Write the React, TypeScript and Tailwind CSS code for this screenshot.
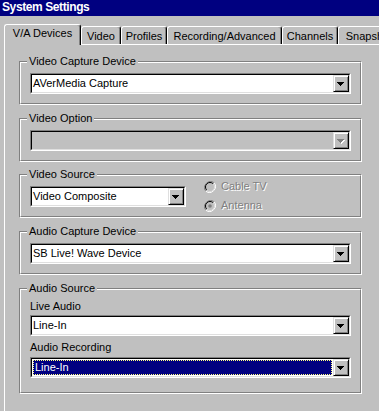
import React from "react";

const tabs = [
  { label: "V/A Devices", w: "w-[77px]", active: true },
  { label: "Video", w: "w-[40px]" },
  { label: "Profiles", w: "w-[46px]" },
  { label: "Recording/Advanced", w: "w-[115px]" },
  { label: "Channels", w: "w-[56px]" },
  { label: "Snapshot", w: "w-[62px]" },
];

function Arrow({ disabled }: { disabled?: boolean }) {
  const d = "M0 0h7v1H0zM1 1h5v1H1zM2 2h3v1H2zM3 3h1v1H3z";
  return (
    <svg width="8" height="5" viewBox="0 0 8 5" className="block">
      {disabled && <path d={d} fill="#ffffff" transform="translate(1 1)" />}
      <path d={d} fill={disabled ? "#808080" : "#000000"} />
    </svg>
  );
}

function Combo({
  value,
  className = "",
  disabled,
  focused,
}: {
  value?: string;
  className?: string;
  disabled?: boolean;
  focused?: boolean;
}) {
  return (
    <div
      className={`h-[21px] flex border border-t-[#808080] border-l-[#808080] border-r-white border-b-white ${className}`}
    >
      <div
        className={`flex-1 flex min-w-0 border border-t-black border-l-black border-r-[#dfdfdf] border-b-[#dfdfdf] ${
          disabled ? "bg-[#c0c0c0]" : "bg-white"
        }`}
      >
        <div className="flex-1 flex min-w-0">
          {focused ? (
            <div className="flex-1 m-[1px] bg-[#000080] border border-dotted border-[#ffff80] text-white leading-[13px] pl-[1px]">
              {value}
            </div>
          ) : (
            <div className="flex-1 leading-[17px] pl-[1px] text-black">{value}</div>
          )}
        </div>
        <div className="w-[16px] h-[17px] flex items-center justify-center pt-[1px] bg-[#c0c0c0] border border-t-[#dfdfdf] border-l-[#dfdfdf] border-r-black border-b-black shadow-[inset_1px_1px_0_#fff,inset_-1px_-1px_0_#808080]">
          <Arrow disabled={disabled} />
        </div>
      </div>
    </div>
  );
}

function Group({
  label,
  className = "",
  children,
}: {
  label: string;
  className?: string;
  children?: React.ReactNode;
}) {
  return (
    <div
      className={`relative border border-t-[#808080] border-l-[#808080] border-r-white border-b-white ${className}`}
    >
      <div className="h-full border border-t-white border-l-white border-r-[#808080] border-b-[#808080] px-[9px]">
        {children}
      </div>
      <span className="absolute left-[7px] top-[-7px] bg-[#c0c0c0] px-[2px] leading-[13px]">{label}</span>
    </div>
  );
}

function Radio({ label, checked }: { label: string; checked?: boolean }) {
  return (
    <div className="flex items-center h-[13px]">
      <svg width="12" height="12" viewBox="0 0 12 12" className="block">
        <path d="M10.2 1.8A6 6 0 0 0 1.8 10.2" fill="none" stroke="#808080" strokeWidth="1" />
        <path d="M1.8 10.2A6 6 0 0 0 10.2 1.8" fill="none" stroke="#ffffff" strokeWidth="1" />
        <circle cx="6" cy="6" r="4.5" fill="#c0c0c0" />
        <path d="M9.2 2.8A4.5 4.5 0 0 0 2.8 9.2" fill="none" stroke="#000000" strokeWidth="1" />
        <path d="M2.8 9.2A4.5 4.5 0 0 0 9.2 2.8" fill="none" stroke="#dfdfdf" strokeWidth="1" />
        {checked && <circle cx="6" cy="6" r="1.8" fill="#808080" />}
      </svg>
      <span className="ml-[5px] text-[#808080] [text-shadow:1px_1px_0_#fff] leading-[13px]">{label}</span>
    </div>
  );
}

export default function App() {
  return (
    <div className="w-[379px] h-[411px] overflow-hidden bg-[#c0c0c0] text-[11px] text-black font-['Liberation_Sans',Arial,sans-serif]">
      {/* Title bar */}
      <div className="h-[16px] bg-[#000080] text-white font-bold text-[12px] tracking-[-0.4px] leading-[14px] pl-[2px] whitespace-nowrap">
        System Settings
      </div>

      {/* Tabs */}
      <div className="h-[28px] flex items-end pl-[4px] whitespace-nowrap">
        {tabs.map((t) =>
          t.active ? (
            <div
              key={t.label}
              className={`${t.w} shrink-0 h-[21px] mb-[-1px] relative z-10 bg-[#c0c0c0] rounded-t-[3px] border-l border-t border-l-white border-t-white border-r border-r-black shadow-[inset_-1px_0_0_#808080] text-center pt-[2px] leading-[13px]`}
            >
              {t.label}
            </div>
          ) : (
            <div
              key={t.label}
              className={`${t.w} shrink-0 h-[18px] rounded-t-[3px] border-l border-t border-l-white border-t-white border-r border-r-black shadow-[inset_-1px_0_0_#808080] text-center pt-[3px] leading-[13px] overflow-hidden`}
            >
              {t.label}
            </div>
          )
        )}
      </div>

      {/* Panel */}
      <div className="ml-[4px] h-[367px] border-l border-t border-white pl-[14px] pt-[16px] w-[400px]">
        <div className="w-[343px] flex flex-col">
          <Group label="Video Capture Device" className="h-[44px]">
            <Combo value="AVerMedia Capture" className="mt-[10px]" />
          </Group>

          <Group label="Video Option" className="h-[44px] mt-[13px]">
            <Combo disabled className="mt-[10px]" />
          </Group>

          <Group label="Video Source" className="h-[44px] mt-[12px]">
            <div className="flex items-start">
              <Combo value="Video Composite" className="w-[156px] mt-[10px]" />
              <div className="ml-[18px] mt-[4px] flex flex-col gap-[6px]">
                <Radio label="Cable TV" />
                <Radio label="Antenna" checked />
              </div>
            </div>
          </Group>

          <Group label="Audio Capture Device" className="h-[44px] mt-[13px]">
            <Combo value="SB Live! Wave Device" className="mt-[10px]" />
          </Group>

          <Group label="Audio Source" className="h-[106px] mt-[13px]">
            <div className="pt-[10px] leading-[13px]">Live Audio</div>
            <Combo value="Line-In" className="mt-[2px]" />
            <div className="mt-[5px] leading-[13px]">Audio Recording</div>
            <Combo value="Line-In" focused className="mt-[3px]" />
          </Group>
        </div>
      </div>
    </div>
  );
}
